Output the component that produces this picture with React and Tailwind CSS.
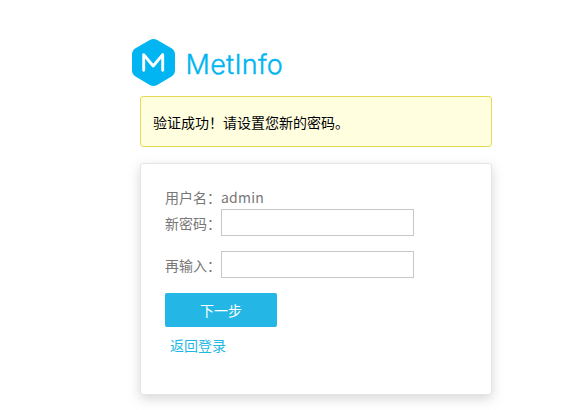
function Logo() {
  return (
    <svg width="155" height="50" viewBox="0 0 155 50" className="block" aria-label="MetInfo">
      <path
        d="M19.8 3 Q23.5 1 27.2 3 L41.1 11.1 Q45 13.4 45 17.6 L45 33.2 Q45 37.4 41.1 39.7 L27.2 48 Q23.5 50 19.8 48 L5.9 39.7 Q2 37.4 2 33.2 L2 17.6 Q2 13.4 5.9 11.1 Z"
        fill="#00b5f1"
      />
      <path d="M13.7 33.2 V17.6 L23.2 29 L32.7 17.6 V33.2" fill="none" stroke="#fff" strokeWidth="2.9" strokeLinecap="round" strokeLinejoin="round" />
      <text x="55.6" y="36.5" textLength="97.2" fontSize="27" fontWeight="300" fill="#00b5f1" stroke="#00b5f1" strokeWidth="0.4" fontFamily="Inter, sans-serif">
        MetInfo
      </text>
    </svg>
  );
}

function PasswordField({ label }) {
  return (
    <label className="flex h-[27px] items-center">
      <span className="w-14 shrink-0 whitespace-nowrap pt-0.5 leading-[27px]">{label}</span>
      <input type="password" className="h-[27px] w-[193px] border border-[#c8c8c8] bg-white px-1 outline-none" />
    </label>
  );
}

export default function App() {
  return (
    <div className="h-[410px] w-full overflow-hidden bg-white pl-[130px] pt-[37px] font-['Noto_Sans_CJK_SC',sans-serif] text-sm text-[#777]">
      <Logo />
      <div className="ml-2.5 mt-[9px] flex h-[51px] w-[352px] items-center rounded-[3px] border border-[#e6db55] bg-[#ffffe0] px-3 text-black">
        验证成功！请设置您新的密码。
      </div>
      <form className="ml-2.5 mt-4 h-[232px] w-[352px] rounded-[3px] border border-[#e5e5e5] bg-white px-6 pt-[25px] shadow-[0_4px_12px_rgba(200,200,200,0.7)]">
        <div className="h-5 leading-4">
          用户名：<span className="tracking-[0.2px]">admin</span>
        </div>
        <div className="flex flex-col gap-[15px]">
          <PasswordField label="新密码：" />
          <PasswordField label="再输入：" />
        </div>
        <button type="button" className="mt-[15px] block h-[34px] w-28 rounded-[2px] bg-[#24b7e5] text-white">
          下一步
        </button>
        <a href="#" className="ml-[5px] mt-2 block leading-5 text-[#24b7e5]">返回登录</a>
      </form>
    </div>
  );
}
